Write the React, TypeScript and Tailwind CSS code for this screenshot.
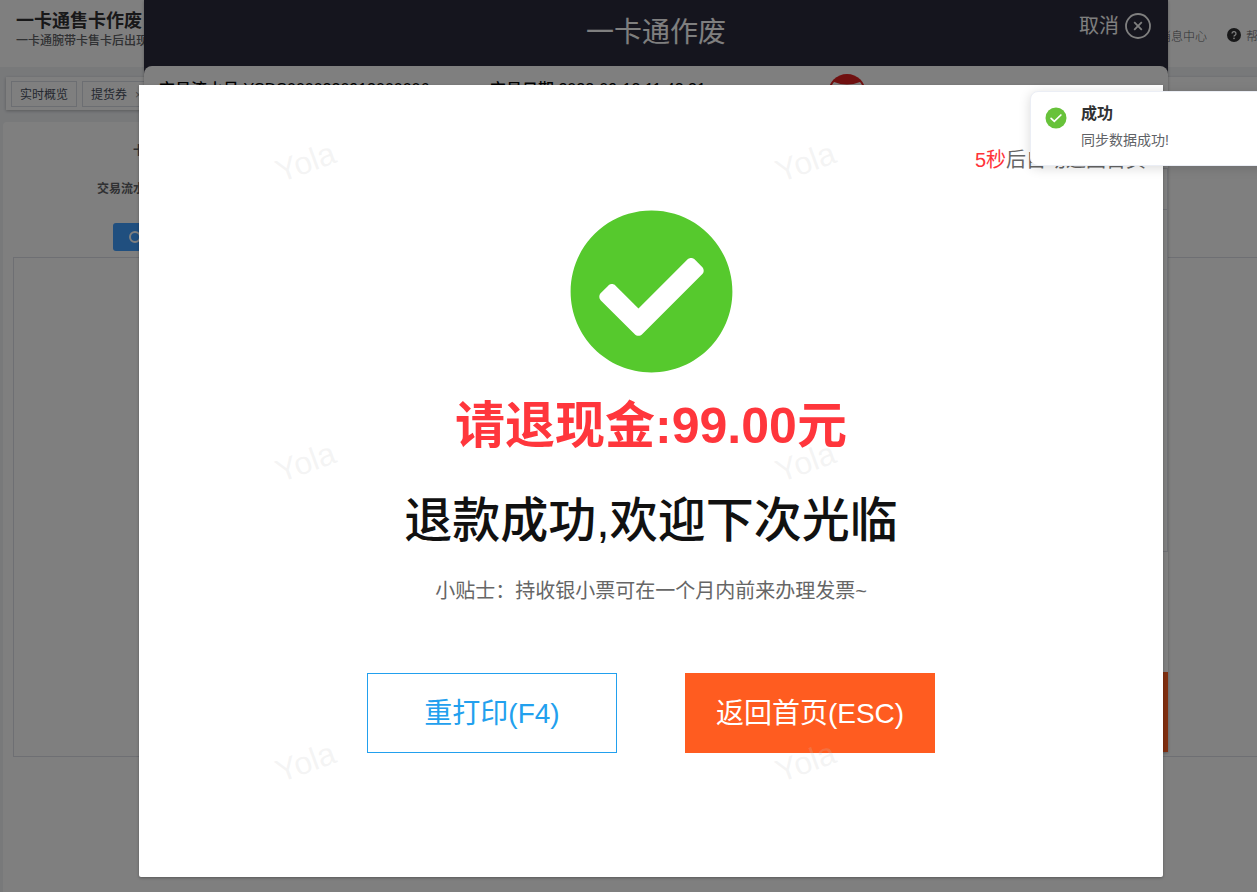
import type { ReactNode } from "react"
import { FaCheckCircle } from "react-icons/fa"

const tabs = ["实时概览", "提货券"]
const marks = [0, 1, 2, 3, 4, 5]

function HelpIcon() {
  return (
    <svg viewBox="0 0 14 14" className="size-[14px]" aria-hidden="true">
      <circle cx="7" cy="7" r="7" fill="#303133" />
      <path d="M5 5.6a2 2 0 1 1 2.9 1.8c-.6.3-.9.6-.9 1.2" fill="none" stroke="#fff" strokeWidth="1.3" />
      <circle cx="7" cy="10.4" r=".8" fill="#fff" />
    </svg>
  )
}

function CircleClose() {
  return (
    <svg viewBox="0 0 26 26" className="size-[26px]" fill="none" stroke="currentColor" strokeWidth="1.8" aria-hidden="true">
      <circle cx="13" cy="13" r="12" />
      <path d="M9.2 9.2l7.6 7.6M16.8 9.2l-7.6 7.6" />
    </svg>
  )
}

function RoundCheck() {
  return (
    <svg viewBox="0 0 22 22" className="size-[22px] shrink-0" aria-hidden="true">
      <circle cx="11" cy="11" r="10.5" fill="#67c23a" />
      <path d="M6.1 11.4l3.2 3 6.6-6.4" fill="none" stroke="#fff" strokeWidth="1.7" strokeLinecap="round" />
    </svg>
  )
}

function Page() {
  return (
    <div className="flex min-h-screen flex-col overflow-hidden bg-[#f0f2f5]">
      <header className="flex h-[67px] justify-between bg-white">
        <div className="pt-3 pl-4">
          <h1 className="text-lg leading-[18px] font-bold text-[#303133]">一卡通售卡作废</h1>
          <p className="text-xs leading-[22px] font-medium text-[#606266]">一卡通腕带卡售卡后出现异常</p>
        </div>
        <nav className="-mr-[37px] flex shrink-0 gap-5 pt-7 text-xs leading-[18px] font-light text-[#606266]">
          <a href="#messages">消息中心</a>
          <a href="#help" className="flex gap-[5px]">
            <HelpIcon />
            帮助中心
          </a>
        </nav>
      </header>

      <nav className="mt-[10px] ml-[6px] flex gap-[5px] bg-white px-[5px] pt-1 pb-[3px] shadow-[0_1px_3px_rgba(0,0,0,0.25)]">
        {tabs.map((tab, i) => (
          <a key={tab} href="#tab" className="flex h-[26px] gap-2 border border-[#d8dce5] px-2 text-xs leading-[26px] text-[#495060]">
            {tab}
            {i > 0 && <span className="text-[#909399]">×</span>}
          </a>
        ))}
      </nav>

      <main className="mt-3 ml-[3px] flex-1 rounded-tl bg-white pt-[17px] pl-[10px] text-xs font-bold text-[#606266]">
        <div className="w-[160px] text-right leading-6">卡面号:</div>
        <div className="mt-[14px] w-[160px] pl-[84px] leading-6 whitespace-nowrap">交易流水号:</div>
        <button className="mt-[22px] ml-[100px] flex h-7 w-20 items-center rounded-[3px] bg-[#409eff] pl-4">
          <span className="size-3 rounded-full border-2 border-white" />
        </button>
        <div className="mt-[6px] h-[500px] border border-r-0 border-[#dcdfe6]" />
      </main>
    </div>
  )
}

function VoidDialog() {
  return (
    <div className="absolute inset-0 flex items-start justify-center pl-[55px]">
      <section className="w-full max-w-[1024px] bg-[#2a2a3c] shadow-[0_1px_3px_rgba(0,0,0,0.3)]">
        <header className="relative h-[66px] pt-3 text-center text-[28px] leading-[42px] text-white">
          <h2>一卡通作废</h2>
          <button className="absolute top-[13px] right-[17px] flex items-center gap-[6px] text-xl leading-[26px]">
            取消
            <CircleClose />
          </button>
        </header>
        <div className="rounded-t-lg bg-white">
          <div className="flex h-[102px] pt-3 pl-[15px] text-base leading-6 font-medium text-black">
            <span className="w-[331px]">交易流水号:YSDS0000220913000006</span>
            <span className="w-[338px]">交易日期:2022-09-13 11:43:31</span>
            <svg viewBox="0 0 38 38" className="-mt-1 size-[38px]" aria-hidden="true">
              <circle cx="19" cy="19" r="19" fill="#e02020" />
              <path d="M6 8q13 5 26 0a17 17 0 1 1-26 0z" fill="#fff" />
            </svg>
          </div>
          <div className="h-[42px] border-y border-r border-[#dcdfe6]" />
          <div className="h-[342px] border-r border-b border-[#dcdfe6]" />
          <div className="h-[120px]" />
          <div className="h-20 bg-[#ff5c20]" />
        </div>
      </section>
    </div>
  )
}

function ActionButton({ className, children }: { className: string; children: ReactNode }) {
  return <button className={`h-20 w-[250px] border pt-[2px] text-[28px] leading-10 ${className}`}>{children}</button>
}

function ResultDialog() {
  return (
    <div className="absolute inset-0 flex items-start justify-center pt-[85px] pl-[45px]">
      <section className="flex w-full max-w-[1024px] flex-col items-center rounded-b-[2px] bg-white pb-[124px] shadow-[0_1px_3px_rgba(0,0,0,0.3)]">
        <p className="mt-[60px] mr-[17px] self-end text-xl leading-[30px] text-[#666]">
          <span className="text-[#ff3339]">5秒</span>后自动返回首页
        </p>
        <FaCheckCircle className="mt-[33px] size-[167px] text-[#56c92d]" aria-hidden="true" />
        <p className="mt-[21px] text-[50px] leading-[60px] font-bold text-[#ff363c]">请退现金:99.00元</p>
        <p className="mt-[30px] text-5xl leading-[70px] font-medium text-[#111]">退款成功,欢迎下次光临</p>
        <p className="mt-5 text-xl leading-[30px] text-[#666]">小贴士：持收银小票可在一个月内前来办理发票~</p>
        <div className="mt-[67px] flex gap-[68px]">
          <ActionButton className="border-[#22a0ee] text-[#22a0ee]">重打印(F4)</ActionButton>
          <ActionButton className="border-[#ff5c20] bg-[#ff5c20] text-white">返回首页(ESC)</ActionButton>
        </div>
      </section>
    </div>
  )
}

function Watermark() {
  return (
    <div className="pointer-events-none absolute inset-0 overflow-hidden">
      <div className="mt-3 ml-14 grid w-[1000px] grid-cols-2">
        {marks.map((m) => (
          <div key={m} className="flex h-[300px] items-center justify-center text-[32px] text-[#c8c8c8]/20">
            <span className="-rotate-20">Yola</span>
          </div>
        ))}
      </div>
    </div>
  )
}

function Toast() {
  return (
    <div
      role="alert"
      className="absolute top-[91px] -right-[104px] flex h-[75px] w-[331px] gap-[14px] rounded-lg border border-[#ebeef5] bg-white pt-3 pl-[14px] shadow-[0_2px_12px_rgba(0,0,0,0.15)]"
    >
      <div className="pt-[3px]">
        <RoundCheck />
      </div>
      <div>
        <h2 className="text-base leading-5 font-bold text-[#303133]">成功</h2>
        <p className="mt-[6px] text-sm leading-[21px] text-[#606266]">同步数据成功!</p>
      </div>
    </div>
  )
}

export default function App() {
  return (
    <div className="relative min-h-screen overflow-hidden font-['Liberation_Sans','Noto_Sans_CJK_SC',sans-serif]">
      <Page />
      <VoidDialog />
      <div className="absolute inset-0 bg-black/50" />
      <ResultDialog />
      <Watermark />
      <Toast />
    </div>
  )
}
